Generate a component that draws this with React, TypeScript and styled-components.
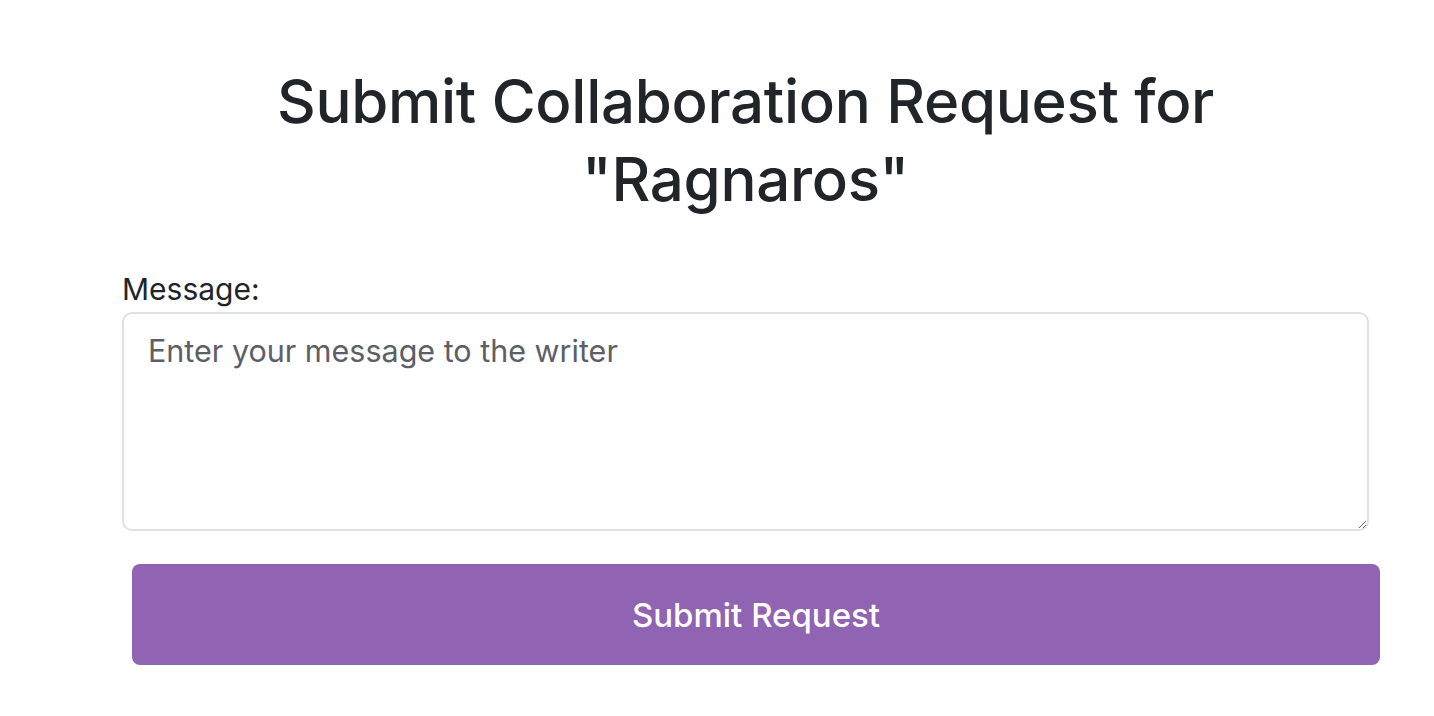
import React from "react";
import styled, { createGlobalStyle } from "styled-components";

const Global = createGlobalStyle`
  html, body { margin: 0; padding: 0; background: #fff; }
  body { font-family: Inter, "Noto Sans", sans-serif; color: #212529; }
  * { box-sizing: border-box; }
`;

const Page = styled.main`
  padding: 62px 0 0 122px;
  width: 1369px;
  display: flex;
  flex-direction: column;
`;

const Title = styled.h1`
  margin: 0 auto;
  width: 980px;
  text-align: center;
  font-size: 60px;
  line-height: 78px;
  font-weight: 500;
  letter-spacing: -0.3px;
  color: #212529;
`;

const Form = styled.form`
  margin-top: 53px;
  display: flex;
  flex-direction: column;
`;

const Label = styled.label`
  font-size: 30px;
  line-height: 36px;
  color: #212529;
  margin-bottom: 5px;
`;

const TextArea = styled.textarea`
  width: 1247px;
  height: 219px;
  border: 2px solid #dee2e6;
  border-radius: 10px;
  padding: 14px 24px;
  font-family: Inter, "Noto Sans", sans-serif;
  font-size: 30.5px;
  line-height: 45px;
  color: #212529;
  resize: vertical;
  &::placeholder { color: #5c6066; opacity: 1; }
`;

const Button = styled.button`
  margin: 33px 0 0 10px;
  width: 1248px;
  height: 101px;
  border: none;
  border-radius: 8px;
  background: #9163b3;
  color: #fff;
  font-family: Inter, "Noto Sans", sans-serif;
  font-size: 33px;
  font-weight: 500;
  cursor: pointer;
`;

export default function App() {
  return (
    <>
      <Global />
      <Page>
        <Title>Submit Collaboration Request for "Ragnaros"</Title>
        <Form onSubmit={(e) => e.preventDefault()}>
          <Label htmlFor="msg">Message:</Label>
          <TextArea id="msg" placeholder="Enter your message to the writer" />
          <Button type="submit">Submit Request</Button>
        </Form>
      </Page>
    </>
  );
}
